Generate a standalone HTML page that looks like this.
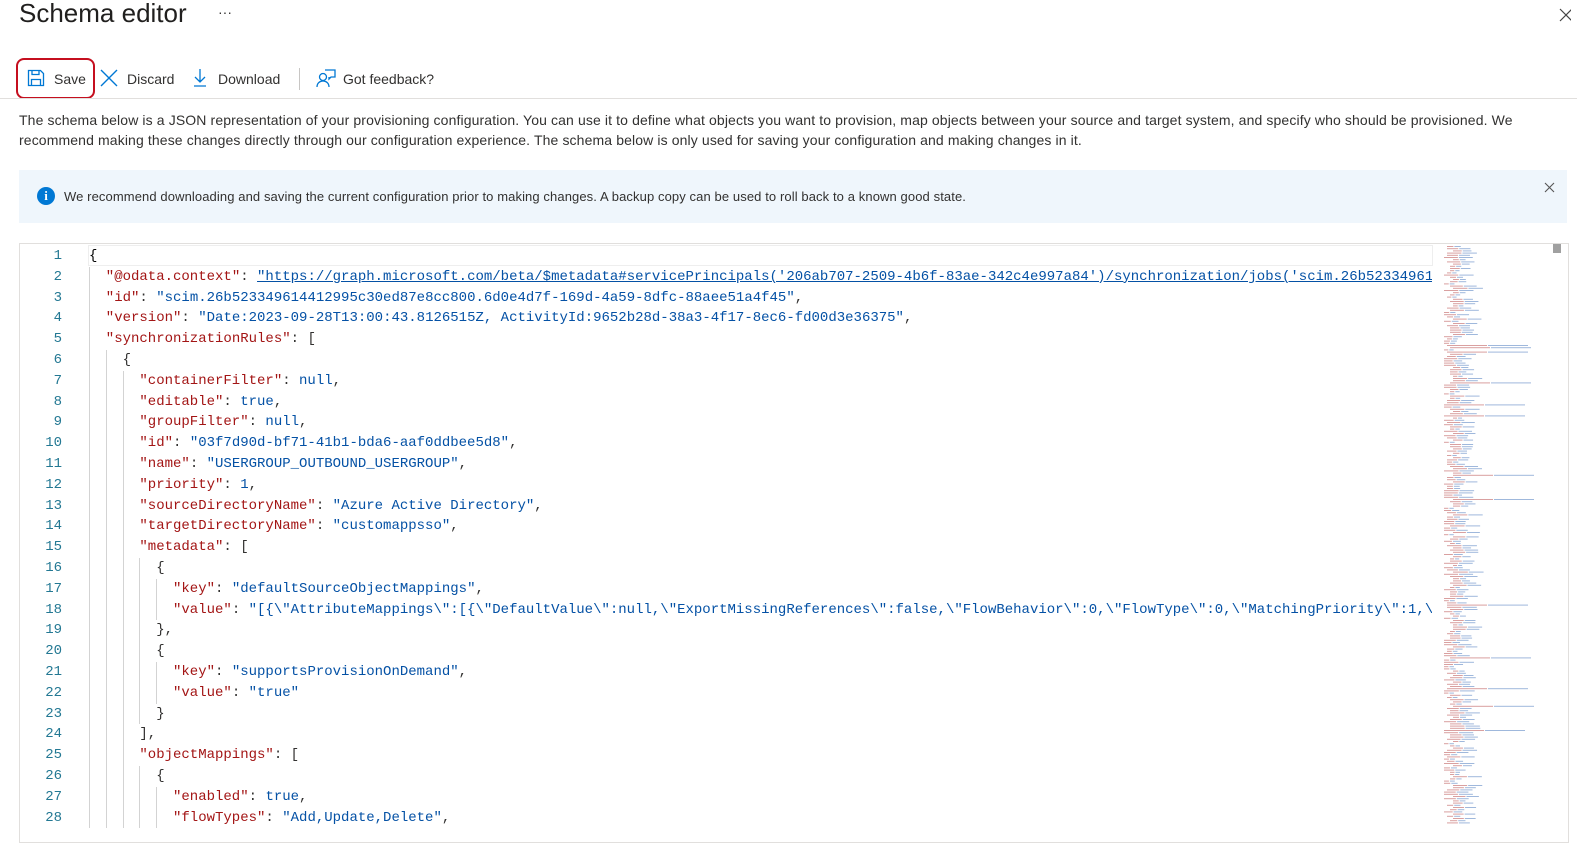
<!DOCTYPE html>
<html><head><meta charset="utf-8"><style>
body{margin:0;width:1577px;height:828px;overflow:hidden;background:#fff;font-family:"Liberation Sans",sans-serif;color:#323130;position:relative}
.a{position:absolute;white-space:nowrap}
.tb{font-size:14px;top:71px}
.code{font-family:"Liberation Mono",monospace;font-size:14px;line-height:20.8px;height:20.8px}
.k{color:#a31515}.s{color:#0451a5}.p{color:#000}.n{color:#0451a5}
.ln{position:absolute;left:20px;width:42px;text-align:right;font-family:"Liberation Mono",monospace;font-size:14px;line-height:20.8px;color:#237893}
.g{position:absolute;width:1px;background:#d3d3d3;height:20.8px}
</style></head><body>
<div class="a" style="left:19px;top:-2px;font-size:26px;color:#201f1e">Schema editor</div>
<div class="a" style="left:218px;top:4px;font-size:14px">···</div>
<svg class="a" style="left:1559px;top:8px" width="12" height="14" stroke="#444" stroke-width="1.2"><path d="M1 1l12 12M13 1L1 13"/></svg>
<div class="a" style="left:16px;top:58px;width:79px;height:41px;border:2px solid #c50f1f;border-radius:8px;box-sizing:border-box"></div>
<svg class="a" style="left:27px;top:69px" width="18" height="18" viewBox="0 0 18 18" fill="none" stroke="#0078d4" stroke-width="1.3"><path d="M1.5 1.5h12l3 3v12h-15z"/><path d="M5 1.5v4h7v-4"/><path d="M4.5 16.5v-6h9v6"/></svg>
<div class="a tb" style="left:54px">Save</div>
<svg class="a" style="left:100px;top:69px" width="18" height="18" viewBox="0 0 18 18" stroke="#0078d4" stroke-width="1.4"><path d="M1 1l16 16M17 1L1 17"/></svg>
<div class="a tb" style="left:127px">Discard</div>
<svg class="a" style="left:192px;top:68px" width="16" height="20" viewBox="0 0 16 20" fill="none" stroke="#0078d4" stroke-width="1.3"><path d="M8 1v13M3 9l5 5 5-5M2 18h12"/></svg>
<div class="a tb" style="left:218px">Download</div>
<div class="a" style="left:299px;top:68px;width:1px;height:22px;background:#c8c6c4"></div>
<svg class="a" style="left:316px;top:68px" width="20" height="20" viewBox="0 0 20 20" fill="none" stroke="#0078d4" stroke-width="1.3"><circle cx="7" cy="9" r="3.5"/><path d="M1 19c0-4 3-6 6-6s6 2 6 6"/><path d="M9 2h10v7h-4l-2 2v-2"/></svg>
<div class="a tb" style="left:343px">Got feedback?</div>
<div class="a" style="left:0;top:98px;width:1577px;height:1px;background:#e1dfdd"></div>
<div class="a" style="left:19px;top:111px;font-size:14px;line-height:19.5px;white-space:normal;width:1540px;letter-spacing:0.12px">The schema below is a JSON representation of your provisioning configuration. You can use it to define what objects you want to provision, map objects between your source and target system, and specify who should be provisioned. We recommend making these changes directly through our configuration experience. The schema below is only used for saving your configuration and making changes in it.</div>
<div class="a" style="left:19px;top:170px;width:1548px;height:53px;background:#eff6fc"></div>
<div class="a" style="left:37px;top:187px;width:18px;height:18px;border-radius:50%;background:#0078d4;color:#fff;font-weight:bold;font-size:13px;text-align:center;line-height:18px;font-family:'Liberation Serif',serif">i</div>
<div class="a" style="left:64px;top:189px;font-size:13px;letter-spacing:0.1px">We recommend downloading and saving the current configuration prior to making changes. A backup copy can be used to roll back to a known good state.</div>
<svg class="a" style="left:1544px;top:182px" width="11" height="11" stroke="#555" stroke-width="1.1"><path d="M1 1l9 9M10 1L1 10"/></svg>
<div class="a" style="left:19px;top:243px;width:1550px;height:600px;border:1px solid #e1dfdd;box-sizing:border-box"></div>
<div class="a" style="left:88px;top:245px;width:1345px;height:21px;border:1px solid #eee;box-sizing:border-box"></div>
<div id="ed"></div>
<svg class="a" style="left:1436px;top:244px" width="116" height="584"><rect width="116" height="584" fill="#fff"/><g id="mm"></g></svg>
<div class="a" style="left:1553px;top:244px;width:8px;height:9px;background:#a0a0a0"></div>
<script>
var L=[
[0,'<span class="p">{</span>'],
[2,'<span class="k">"@odata.context"</span>: <span class="s" style="text-decoration:underline">"https://graph.microsoft.com/beta/$metadata#servicePrincipals(\'206ab707-2509-4b6f-83ae-342c4e997a84\')/synchronization/jobs(\'scim.26b52334961</span>'],
[2,'<span class="k">"id"</span>: <span class="s">"scim.26b523349614412995c30ed87e8cc800.6d0e4d7f-169d-4a59-8dfc-88aee51a4f45"</span>,'],
[2,'<span class="k">"version"</span>: <span class="s">"Date:2023-09-28T13:00:43.8126515Z, ActivityId:9652b28d-38a3-4f17-8ec6-fd00d3e36375"</span>,'],
[2,'<span class="k">"synchronizationRules"</span>: ['],
[4,'{'],
[6,'<span class="k">"containerFilter"</span>: <span class="n">null</span>,'],
[6,'<span class="k">"editable"</span>: <span class="n">true</span>,'],
[6,'<span class="k">"groupFilter"</span>: <span class="n">null</span>,'],
[6,'<span class="k">"id"</span>: <span class="s">"03f7d90d-bf71-41b1-bda6-aaf0ddbee5d8"</span>,'],
[6,'<span class="k">"name"</span>: <span class="s">"USERGROUP_OUTBOUND_USERGROUP"</span>,'],
[6,'<span class="k">"priority"</span>: <span class="n">1</span>,'],
[6,'<span class="k">"sourceDirectoryName"</span>: <span class="s">"Azure Active Directory"</span>,'],
[6,'<span class="k">"targetDirectoryName"</span>: <span class="s">"customappsso"</span>,'],
[6,'<span class="k">"metadata"</span>: ['],
[8,'{'],
[10,'<span class="k">"key"</span>: <span class="s">"defaultSourceObjectMappings"</span>,'],
[10,'<span class="k">"value"</span>: <span class="s">"[{\\"AttributeMappings\\":[{\\"DefaultValue\\":null,\\"ExportMissingReferences\\":false,\\"FlowBehavior\\":0,\\"FlowType\\":0,\\"MatchingPriority\\":1,\\</span>'],
[8,'},'],
[8,'{'],
[10,'<span class="k">"key"</span>: <span class="s">"supportsProvisionOnDemand"</span>,'],
[10,'<span class="k">"value"</span>: <span class="s">"true"</span>'],
[8,'}'],
[6,'],'],
[6,'<span class="k">"objectMappings"</span>: ['],
[8,'{'],
[10,'<span class="k">"enabled"</span>: <span class="n">true</span>,'],
[10,'<span class="k">"flowTypes"</span>: <span class="s">"Add,Update,Delete"</span>,']
];
var h='',cw=8.4;
L.forEach(function(l,i){var t=246+i*20.8;
h+='<div class="ln" style="top:'+t+'px">'+(i+1)+'</div>';
for(var g=0;g<l[0]/2;g++)h+='<div class="g" style="left:'+(89+g*2*cw)+'px;top:'+t+'px"></div>';
h+='<div class="a code" style="left:'+(89+l[0]*cw)+'px;top:'+t+'px;max-width:'+(1343-l[0]*cw)+'px;overflow:hidden">'+l[1]+'</div>';});
document.getElementById('ed').innerHTML=h;
var m='',seed=3;function r(){seed=(seed*9301+49297)%233280;return seed/233280;}
for(var y=2;y<580;y+=2.2){var ind=8+Math.floor(r()*4)*3;var w=8+r()*22;if(r()<0.06)w=80;
m+='<rect x="'+ind+'" y="'+y+'" width="'+(w*0.5)+'" height="1" fill="#d9a0a0"/><rect x="'+(ind+w*0.5+1)+'" y="'+y+'" width="'+(w*0.5)+'" height="1" fill="#9fb8dc"/>';}
document.getElementById('mm').innerHTML=m;
</script>
</body></html>
